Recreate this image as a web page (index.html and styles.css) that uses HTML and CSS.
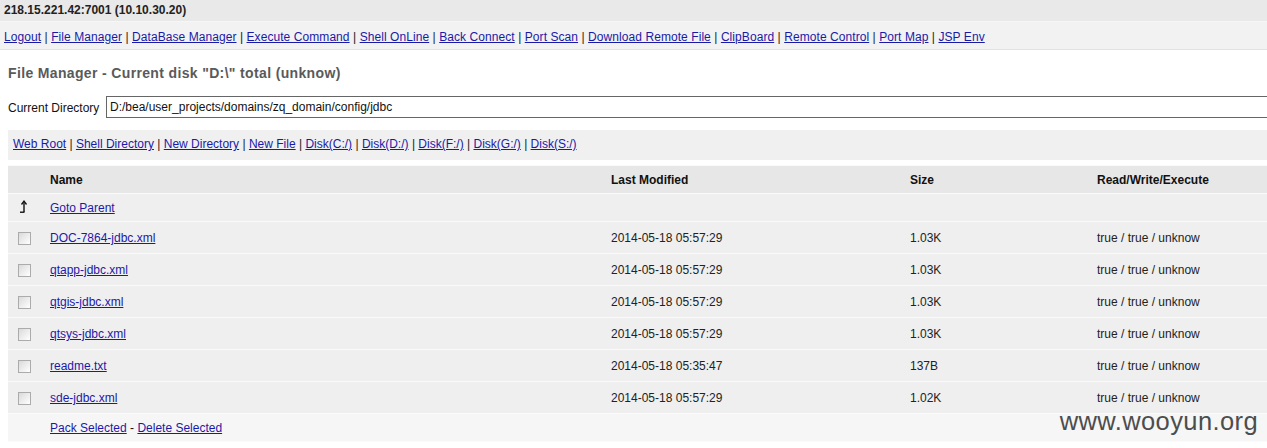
FILE: index.html
```html
<!DOCTYPE html>
<html>
<head>
<meta charset="utf-8">
<title>File Manager</title>
<link rel="stylesheet" href="styles.css">
</head>
<body>
<div class="topbar">218.15.221.42:7001 (10.10.30.20)</div>
<div class="navbar">
  <a href="#">Logout</a> | <a href="#">File Manager</a> | <a href="#">DataBase Manager</a> | <a href="#">Execute Command</a> | <a href="#">Shell OnLine</a> | <a href="#">Back Connect</a> | <a href="#">Port Scan</a> | <a href="#">Download Remote File</a> | <a href="#">ClipBoard</a> | <a href="#">Remote Control</a> | <a href="#">Port Map</a> | <a href="#">JSP Env</a>
</div>
<div class="main">
  <h2 class="heading">File Manager - Current disk "D:\" total (unknow)</h2>
  <div class="dir-row">
    <span class="dir-label">Current Directory</span>
    <input class="dir-input" type="text" value="D:/bea/user_projects/domains/zq_domain/config/jdbc">
  </div>
  <div class="toolbar">
    <a href="#">Web Root</a> | <a href="#">Shell Directory</a> | <a href="#">New Directory</a> | <a href="#">New File</a> | <a href="#">Disk(C:/)</a> | <a href="#">Disk(D:/)</a> | <a href="#">Disk(F:/)</a> | <a href="#">Disk(G:/)</a> | <a href="#">Disk(S:/)</a>
  </div>
  <table class="files">
    <colgroup>
      <col class="c-check"><col class="c-name"><col class="c-date"><col class="c-size"><col class="c-rwx">
    </colgroup>
    <tr class="head">
      <th></th><th>Name</th><th>Last Modified</th><th>Size</th><th>Read/Write/Execute</th>
    </tr>
    <tr class="parent">
      <td class="chk"><svg class="up" width="10" height="13" viewBox="0 0 10 13"><path d="M5 12V2" stroke="#111" stroke-width="1.4" fill="none"/><path d="M2.5 4.5L5 1.2 7.5 4.5" stroke="#111" stroke-width="1.3" fill="none"/><path d="M1 12.2H5.5" stroke="#111" stroke-width="1.4"/></svg></td>
      <td><a href="#">Goto Parent</a></td><td></td><td></td><td></td>
    </tr>
    <tr class="file">
      <td class="chk"><span class="cb"></span></td>
      <td><a href="#">DOC-7864-jdbc.xml</a></td><td>2014-05-18 05:57:29</td><td>1.03K</td><td>true / true / unknow</td>
    </tr>
    <tr class="file">
      <td class="chk"><span class="cb"></span></td>
      <td><a href="#">qtapp-jdbc.xml</a></td><td>2014-05-18 05:57:29</td><td>1.03K</td><td>true / true / unknow</td>
    </tr>
    <tr class="file">
      <td class="chk"><span class="cb"></span></td>
      <td><a href="#">qtgis-jdbc.xml</a></td><td>2014-05-18 05:57:29</td><td>1.03K</td><td>true / true / unknow</td>
    </tr>
    <tr class="file">
      <td class="chk"><span class="cb"></span></td>
      <td><a href="#">qtsys-jdbc.xml</a></td><td>2014-05-18 05:57:29</td><td>1.03K</td><td>true / true / unknow</td>
    </tr>
    <tr class="file">
      <td class="chk"><span class="cb"></span></td>
      <td><a href="#">readme.txt</a></td><td>2014-05-18 05:35:47</td><td>137B</td><td>true / true / unknow</td>
    </tr>
    <tr class="file">
      <td class="chk"><span class="cb"></span></td>
      <td><a href="#">sde-jdbc.xml</a></td><td>2014-05-18 05:57:29</td><td>1.02K</td><td>true / true / unknow</td>
    </tr>
    <tr class="actions">
      <td></td>
      <td colspan="4"><a href="#">Pack Selected</a> - <a href="#">Delete Selected</a></td>
    </tr>
  </table>
</div>
<div class="watermark">www.wooyun.org</div>
</body>
</html>
```

FILE: styles.css
```css
html, body {
  margin: 0;
  padding: 0;
  overflow: hidden;
}
body {
  font-family: "Liberation Sans", Arial, sans-serif;
  font-size: 12px;
  color: #111;
  background: #fff;
  position: relative;
  height: 448px;
}
a {
  color: #1a1aa8;
  text-decoration: underline;
}
.topbar {
  height: 21px;
  line-height: 21px;
  padding-left: 4px;
  background: #e9e9e9;
  font-weight: bold;
  color: #222;
  border-bottom: 1px solid #f6f6f6;
}
.navbar {
  height: 27px;
  line-height: 30px;
  padding-left: 4px;
  background: #f2f2f2;
  border-bottom: 1px solid #e2e2e2;
  color: #222;
  white-space: nowrap;
  letter-spacing: 0.07px;
}
.main {
  padding-left: 8px;
}
.heading {
  margin: 0;
  padding-top: 15px;
  height: 24px;
  line-height: 17px;
  font-size: 14px;
  font-weight: bold;
  letter-spacing: 0.35px;
  color: #5a5a5a;
}
.dir-row {
  display: flex;
  align-items: center;
  margin-top: 7px;
  height: 22px;
}
.dir-label {
  width: 98px;
  flex: none;
  padding-top: 1px;
}
.dir-input {
  flex: 1;
  height: 22px;
  box-sizing: border-box;
  border: 1px solid #666;
  border-right: none;
  padding: 0 0 1px 3px;
  font-family: "Liberation Sans", Arial, sans-serif;
  font-size: 12px;
  color: #111;
  outline: none;
}
.toolbar {
  margin-top: 12px;
  height: 30px;
  line-height: 28px;
  padding-left: 5px;
  background: #f0f0f0;
  color: #222;
  white-space: nowrap;
}
.files {
  margin-top: 5px;
  width: 1259px;
  table-layout: fixed;
  border-collapse: collapse;
}
.c-check { width: 42px; }
.c-name { width: 561px; }
.c-date { width: 299px; }
.c-size { width: 187px; }
.c-rwx { width: 170px; }
.files th, .files td {
  padding: 0;
  text-align: left;
  white-space: nowrap;
  border-top: 1px solid #fafafa;
  border-bottom: 1px solid #fafafa;
}
.files th {
  height: 27px;
  background: #e7e7e7;
  font-weight: bold;
  color: #111;
}
.files .parent td {
  height: 26px;
  background: #efefef;
  padding-top: 1px;
}
.files .file td {
  height: 30px;
  background: #efefef;
  color: #222;
  padding-top: 1px;
}
.files .actions td {
  height: 26px;
  background: #f6f6f6;
  padding-top: 1px;
}
.files td.chk {
  padding-left: 10px;
}
.up {
  display: block;
  margin-left: 1px;
  margin-top: -3px;
}
.cb {
  display: block;
  width: 11px;
  height: 11px;
  border: 1px solid #ababab;
  background: linear-gradient(135deg, #dadada 0%, #f4f4f4 70%, #fff 100%);
}
.watermark {
  position: absolute;
  right: 9px;
  bottom: 18px;
  font-family: "Liberation Sans", Arial, sans-serif;
  font-size: 25.5px;
  letter-spacing: 0.4px;
  color: #4d4d4d;
  line-height: 18px;
}
```
